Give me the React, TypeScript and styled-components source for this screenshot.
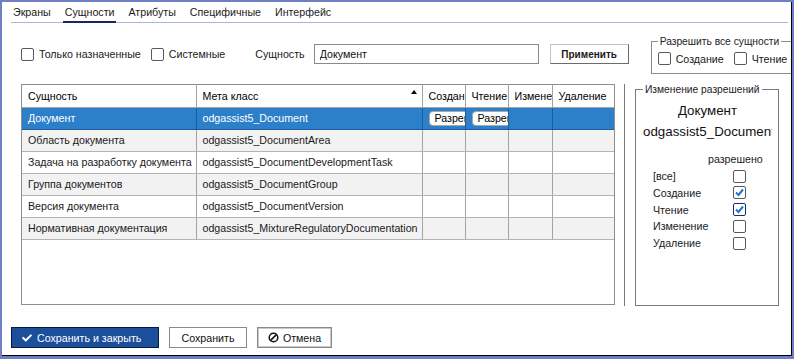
import React from 'react';
import styled, { createGlobalStyle } from 'styled-components';
import { FaCheck } from 'react-icons/fa';

const GlobalStyle = createGlobalStyle`
  html, body {
    margin: 0;
    padding: 0;
  }
  body {
    font-family: "Liberation Sans", Arial, sans-serif;
    font-size: 10.67px;
    color: #111;
    background: #fff;
  }
  * {
    box-sizing: border-box;
  }
`;

const Frame = styled.div`
  width: 794px;
  height: 359px;
  border: 2px solid #6e7fc4;
  border-bottom-width: 3px;
  background: #6e7fc4;
`;

const Inner = styled.div`
  height: 100%;
  background: #fff;
  border-right: 1px solid #000;
  border-bottom: 1px solid #000;
  display: flex;
  flex-direction: column;
  overflow: hidden;
`;

const TabBar = styled.div`
  display: flex;
  height: 21px;
  margin: 0 3px 0 9px;
  border-bottom: 1px solid #a9b5e3;
  flex-shrink: 0;
`;

interface TabProps {
  $active?: boolean;
}

const Tab = styled.div<TabProps>`
  display: flex;
  align-items: center;
  padding: 0 2px;
  margin-right: 10px;
  margin-bottom: -1px;
  border-bottom: 2px solid ${(p) => (p.$active ? '#1b2566' : 'transparent')};
  color: #1a1a1a;
`;

const Body = styled.div`
  display: flex;
  flex-direction: column;
  padding-left: 19px;
`;

const FilterRow = styled.div`
  display: flex;
  align-items: flex-start;
  margin-top: 12px;
  white-space: nowrap;
`;

const LeftGroup = styled.div`
  display: flex;
  align-items: center;
  height: 20px;
  margin-top: 9px;
  flex-shrink: 0;
`;

const CheckLabel = styled.label`
  display: flex;
  align-items: center;
  gap: 5px;
  margin-right: 10px;
  color: #1a1a1a;
`;

interface BoxProps {
  $focus?: boolean;
}

const Box = styled.span<BoxProps>`
  width: 13px;
  height: 13px;
  flex-shrink: 0;
  border: 1px solid ${(p) => (p.$focus ? '#1a2c70' : '#5a5a5a')};
  border-radius: 2px;
  background: #fff;
  display: flex;
  align-items: center;
  justify-content: center;
`;

const FieldLabel = styled.span`
  margin-left: 20px;
  margin-right: 9px;
  color: #1a1a1a;
`;

const TextInput = styled.input`
  width: 225px;
  height: 20px;
  border: 1px solid #8a8a8a;
  padding: 0 5px;
  font-family: inherit;
  font-size: 10.67px;
  color: #111;
  outline: none;
`;

const ApplyButton = styled.button`
  margin-left: 11px;
  width: 79px;
  height: 20px;
  padding: 0;
  background: #fff;
  border: 1px solid;
  border-color: #c4c4c4 #6b6b6b #6b6b6b #c4c4c4;
  font-family: inherit;
  font-size: 10px;
  font-weight: bold;
  color: #1a1a1a;
`;

const AllFieldset = styled.fieldset`
  margin: 0 0 0 22px;
  padding: 4px 30px 8px 6px;
  border: 1px solid #8c8c8c;
  display: flex;
  align-items: center;
  flex-shrink: 0;
  min-width: 0;
`;

const Legend = styled.legend`
  font-size: 10.25px;
  line-height: 13px;
  padding: 0 2px;
  color: #222;
`;

const AllRow = styled.div`
  display: flex;
  align-items: center;
`;

const MainRow = styled.div`
  display: flex;
  align-items: flex-start;
  margin-top: 10px;
`;

const TableBox = styled.div`
  width: 594px;
  height: 221px;
  border: 1px solid #8f8f8f;
  overflow: hidden;
  flex-shrink: 0;
`;

const Grid = styled.table`
  width: 100%;
  border-collapse: collapse;
  table-layout: fixed;
`;

const Th = styled.th`
  height: 22px;
  padding: 0 5px 0 6px;
  text-align: left;
  font-weight: normal;
  color: #000;
  border-right: 1px solid #a3a3a3;
  border-bottom: 1px solid #a3a3a3;
  white-space: nowrap;
  overflow: hidden;
  &:last-child {
    border-right: none;
  }
`;

const HeadInner = styled.div`
  display: flex;
  align-items: center;
  justify-content: space-between;
`;

const SortArrow = styled.span`
  width: 0;
  height: 0;
  border-left: 3px solid transparent;
  border-right: 3px solid transparent;
  border-bottom: 4px solid #000;
  margin-bottom: 7px;
`;

interface RowProps {
  $selected?: boolean;
  $shade?: boolean;
}

const Tr = styled.tr<RowProps>`
  background: ${(p) => (p.$selected ? '#2c80c9' : p.$shade ? '#f2f2f2' : '#fff')};
  color: ${(p) => (p.$selected ? '#fff' : '#1a1a1a')};
`;

const Td = styled.td<RowProps>`
  height: 22px;
  padding: 0 5px 0 6px;
  white-space: nowrap;
  overflow: hidden;
  border-right: 1px solid ${(p) => (p.$selected ? '#1d5d9c' : '#a3a3a3')};
  border-bottom: 1px solid ${(p) => (p.$selected ? '#1d5d9c' : '#b4b4b4')};
  &:last-child {
    border-right: none;
  }
`;

const PillButton = styled.span`
  display: inline-block;
  height: 15px;
  line-height: 13px;
  padding: 0 5px;
  border: 1px solid #a8a8a8;
  border-radius: 4px;
  background: #fff;
  color: #000;
  vertical-align: middle;
`;

const Separator = styled.div`
  width: 1px;
  height: 222px;
  margin-left: 9px;
  background: #7a7a7a;
  flex-shrink: 0;
`;

const PermFieldset = styled.fieldset`
  margin: -1px 0 0 10px;
  width: 144px;
  height: 223px;
  padding: 0 6px 0 7px;
  border: 1px solid #7a7a7a;
  min-width: 0;
  flex-shrink: 0;
`;

const Title = styled.div`
  font-size: 13.33px;
  line-height: 21px;
  text-align: center;
  white-space: nowrap;
  overflow: hidden;
  color: #111;
  &:first-of-type {
    margin-top: 4px;
  }
`;

const PermGrid = styled.div`
  display: grid;
  grid-template-columns: 55px 60px;
  grid-auto-rows: 16.75px;
  padding-left: 10px;
  margin-top: 9px;
  align-items: center;
  color: #1a1a1a;
`;

const PermHead = styled.div`
  grid-column: 2;
  height: 21px;
  line-height: 16px;
  align-self: start;
`;

const PermCell = styled.div`
  display: flex;
  padding-left: 25px;
`;

const Footer = styled.div`
  display: flex;
  margin-top: 21px;
  padding-left: 9px;
`;

interface BtnProps {
  $width: number;
}

const SaveCloseButton = styled.button<BtnProps>`
  width: ${(p) => p.$width}px;
  height: 21px;
  display: flex;
  align-items: center;
  gap: 5px;
  padding: 0 0 0 10px;
  background: #1c4f9b;
  border: 1px solid #0b1a33;
  color: #fff;
  font-family: inherit;
  font-size: 10.67px;
`;

const PlainButton = styled.button<BtnProps & { $thick?: boolean }>`
  width: ${(p) => p.$width}px;
  height: 21px;
  margin-left: 10px;
  display: flex;
  align-items: center;
  justify-content: center;
  gap: 4px;
  padding: 0;
  background: #fff;
  border: 1px solid #8a8a8a;
  box-shadow: ${(p) => (p.$thick ? 'inset 0 0 0 1px #c8c8c8' : 'none')};
  color: #111;
  font-family: inherit;
  font-size: 10.67px;
`;

const CheckMark = () => (
  <svg width="11" height="11" viewBox="0 0 11 11">
    <path d="M2 5.5 L4.5 8 L9 2.5" fill="none" stroke="#1f72c6" strokeWidth="2" />
  </svg>
);

const BanIcon = () => (
  <svg width="11" height="11" viewBox="0 0 11 11">
    <circle cx="5.5" cy="5.5" r="4.3" fill="none" stroke="#111" strokeWidth="1.5" />
    <line x1="2.6" y1="8.4" x2="8.4" y2="2.6" stroke="#111" strokeWidth="1.5" />
  </svg>
);

const rows = [
  ['Документ', 'odgassist5_Document'],
  ['Область документа', 'odgassist5_DocumentArea'],
  ['Задача на разработку документа', 'odgassist5_DocumentDevelopmentTask'],
  ['Группа документов', 'odgassist5_DocumentGroup'],
  ['Версия документа', 'odgassist5_DocumentVersion'],
  ['Нормативная документация', 'odgassist5_MixtureRegulatoryDocumentation'],
];

const perms = [
  { name: '[все]', checked: false },
  { name: 'Создание', checked: true },
  { name: 'Чтение', checked: true, focus: true },
  { name: 'Изменение', checked: false },
  { name: 'Удаление', checked: false },
];

const tabs = ['Экраны', 'Сущности', 'Атрибуты', 'Специфичные', 'Интерфейс'];

const App = () => (
  <>
    <GlobalStyle />
    <Frame>
      <Inner>
        <TabBar>
          {tabs.map((t) => (
            <Tab key={t} $active={t === 'Сущности'}>
              {t}
            </Tab>
          ))}
        </TabBar>
        <Body>
          <FilterRow>
            <LeftGroup>
              <CheckLabel>
                <Box />
                Только назначенные
              </CheckLabel>
              <CheckLabel>
                <Box />
                Системные
              </CheckLabel>
              <FieldLabel>Сущность</FieldLabel>
              <TextInput defaultValue="Документ" />
              <ApplyButton>Применить</ApplyButton>
            </LeftGroup>
            <AllFieldset>
              <Legend>Разрешить все сущности</Legend>
              <AllRow>
                <CheckLabel>
                  <Box />
                  Создание
                </CheckLabel>
                <CheckLabel>
                  <Box />
                  Чтение
                </CheckLabel>
              </AllRow>
            </AllFieldset>
          </FilterRow>
          <MainRow>
            <TableBox>
              <Grid>
                <colgroup>
                  <col style={{ width: 174 }} />
                  <col style={{ width: 226 }} />
                  <col style={{ width: 43 }} />
                  <col style={{ width: 43 }} />
                  <col style={{ width: 44 }} />
                  <col />
                </colgroup>
                <thead>
                  <tr>
                    <Th>Сущность</Th>
                    <Th>
                      <HeadInner>
                        Мета класс
                        <SortArrow />
                      </HeadInner>
                    </Th>
                    <Th>Создание</Th>
                    <Th>Чтение</Th>
                    <Th>Изменение</Th>
                    <Th>Удаление</Th>
                  </tr>
                </thead>
                <tbody>
                  {rows.map(([name, meta], i) => {
                    const sel = i === 0;
                    return (
                      <Tr key={meta} $selected={sel} $shade={i % 2 === 1}>
                        <Td $selected={sel}>{name}</Td>
                        <Td $selected={sel}>{meta}</Td>
                        <Td $selected={sel}>{sel && <PillButton>Разрешить</PillButton>}</Td>
                        <Td $selected={sel}>{sel && <PillButton>Разрешить</PillButton>}</Td>
                        <Td $selected={sel} />
                        <Td $selected={sel} />
                      </Tr>
                    );
                  })}
                </tbody>
              </Grid>
            </TableBox>
            <Separator />
            <PermFieldset>
              <Legend>Изменение разрешений</Legend>
              <Title>Документ</Title>
              <Title>odgassist5_Document</Title>
              <PermGrid>
                <PermHead>разрешено</PermHead>
                {perms.map((p) => (
                  <React.Fragment key={p.name}>
                    <div>{p.name}</div>
                    <PermCell>
                      <Box $focus={p.focus}>{p.checked && <CheckMark />}</Box>
                    </PermCell>
                  </React.Fragment>
                ))}
              </PermGrid>
            </PermFieldset>
          </MainRow>
        </Body>
        <Footer>
          <SaveCloseButton $width={148}>
            <FaCheck size={10} />
            Сохранить и закрыть
          </SaveCloseButton>
          <PlainButton $width={78}>Сохранить</PlainButton>
          <PlainButton $width={75} $thick>
            <BanIcon />
            Отмена
          </PlainButton>
        </Footer>
      </Inner>
    </Frame>
  </>
);

export default App;
